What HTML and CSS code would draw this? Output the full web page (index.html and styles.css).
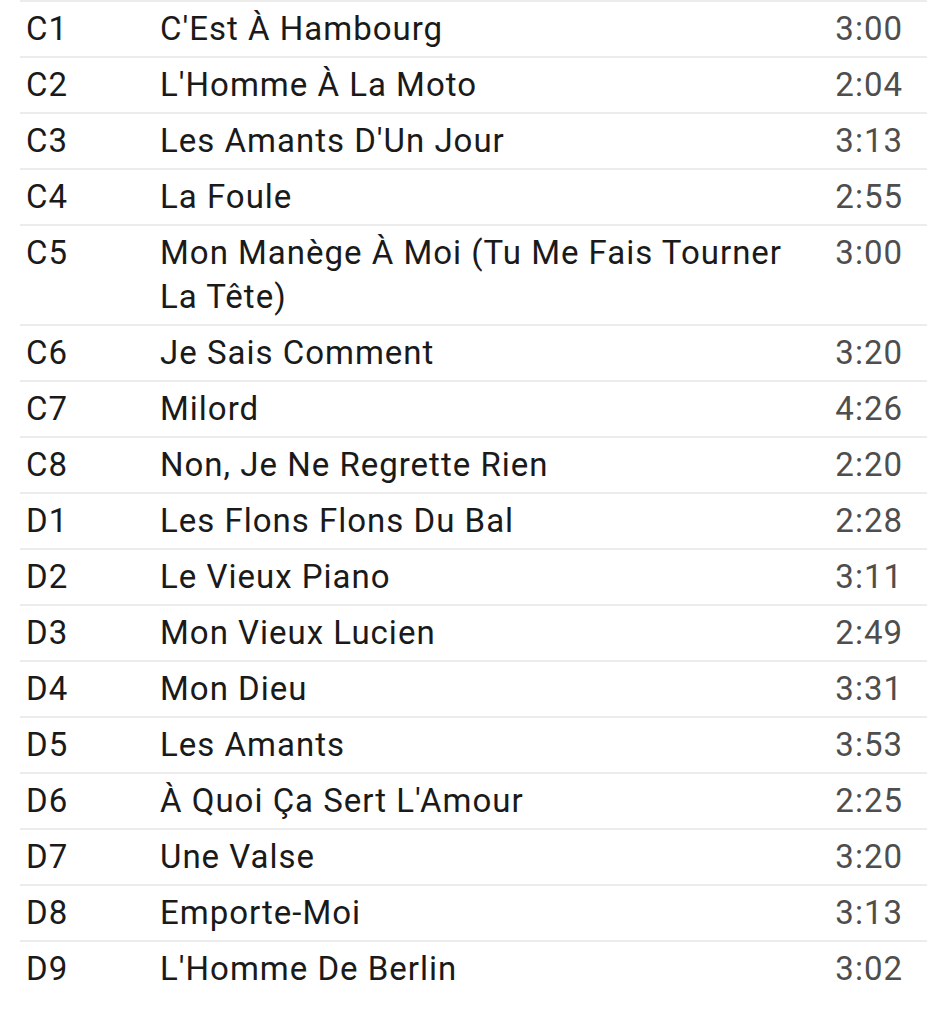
FILE: index.html
```html
<!DOCTYPE html>
<html lang="fr">
<head>
<meta charset="utf-8">
<title>Tracklist</title>
<link rel="stylesheet" href="styles.css">
</head>
<body>
<div class="tracklist">
  <div class="track"><span class="pos">C1</span><span class="title">C'Est À Hambourg</span><span class="dur">3:00</span></div>
  <div class="track"><span class="pos">C2</span><span class="title">L'Homme À La Moto</span><span class="dur">2:04</span></div>
  <div class="track"><span class="pos">C3</span><span class="title">Les Amants D'Un Jour</span><span class="dur">3:13</span></div>
  <div class="track"><span class="pos">C4</span><span class="title">La Foule</span><span class="dur">2:55</span></div>
  <div class="track"><span class="pos">C5</span><span class="title">Mon Manège À Moi (Tu Me Fais Tourner La Tête)</span><span class="dur">3:00</span></div>
  <div class="track"><span class="pos">C6</span><span class="title">Je Sais Comment</span><span class="dur">3:20</span></div>
  <div class="track"><span class="pos">C7</span><span class="title">Milord</span><span class="dur">4:26</span></div>
  <div class="track"><span class="pos">C8</span><span class="title">Non, Je Ne Regrette Rien</span><span class="dur">2:20</span></div>
  <div class="track"><span class="pos">D1</span><span class="title">Les Flons Flons Du Bal</span><span class="dur">2:28</span></div>
  <div class="track"><span class="pos">D2</span><span class="title">Le Vieux Piano</span><span class="dur">3:11</span></div>
  <div class="track"><span class="pos">D3</span><span class="title">Mon Vieux Lucien</span><span class="dur">2:49</span></div>
  <div class="track"><span class="pos">D4</span><span class="title">Mon Dieu</span><span class="dur">3:31</span></div>
  <div class="track"><span class="pos">D5</span><span class="title">Les Amants</span><span class="dur">3:53</span></div>
  <div class="track"><span class="pos">D6</span><span class="title">À Quoi Ça Sert L'Amour</span><span class="dur">2:25</span></div>
  <div class="track"><span class="pos">D7</span><span class="title">Une Valse</span><span class="dur">3:20</span></div>
  <div class="track"><span class="pos">D8</span><span class="title">Emporte-Moi</span><span class="dur">3:13</span></div>
  <div class="track"><span class="pos">D9</span><span class="title">L'Homme De Berlin</span><span class="dur">3:02</span></div>
</div>
</body>
</html>
```

FILE: styles.css
```css
html, body {
  margin: 0;
  padding: 0;
  background: #ffffff;
}

body {
  font-family: Roboto, "Noto Sans", "Liberation Sans", sans-serif;
  font-size: 33px;
  line-height: 44px;
  letter-spacing: 1px;
  color: #1a1a1a;
}

.tracklist {
  margin: 0 0 0 20px;
  width: 907px;
}

.track {
  display: grid;
  grid-template-columns: 134px 1fr 72px;
  align-items: start;
  border-top: 2px solid #ececec;
  padding: 5px 24px 5px 6px;
}

.track .title {
  padding-right: 14px;
}

.track .dur {
  text-align: right;
  color: #4e4e4e;
}
```
